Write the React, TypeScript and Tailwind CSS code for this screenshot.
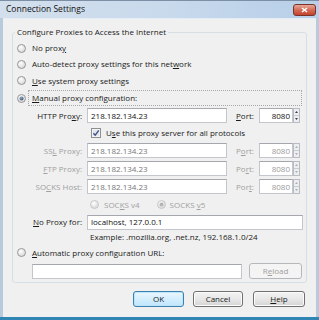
const font = "font-['Open_Sans',sans-serif] text-[8px] leading-none";

function U({ children }: { children: string }) {
  return <span className="underline underline-offset-[1px]">{children}</span>;
}

function Radio({ checked, disabled }: { checked?: boolean; disabled?: boolean }) {
  return (
    <svg width="9" height="9" viewBox="0 0 9 9" className="shrink-0">
      <defs>
        <radialGradient id="rg" cx="0.4" cy="0.35" r="0.7">
          <stop offset="0" stopColor="#ffffff" />
          <stop offset="1" stopColor={disabled ? "#e6e6e6" : "#d4d4d4"} />
        </radialGradient>
        <radialGradient id="dot" cx="0.4" cy="0.35" r="0.7">
          <stop offset="0" stopColor="#9bb0c8" />
          <stop offset="1" stopColor="#2e4a6a" />
        </radialGradient>
      </defs>
      <circle cx="4.5" cy="4.5" r="4" fill="url(#rg)" stroke={disabled ? "#c4c4c4" : "#8e8f8f"} strokeWidth="0.9" />
      {checked && <circle cx="4.5" cy="4.5" r="2" fill={disabled ? "#b5b5b5" : "url(#dot)"} />}
    </svg>
  );
}

function Check() {
  return (
    <svg width="10" height="10" viewBox="0 0 10 10" className="shrink-0">
      <rect x="0.5" y="0.5" width="9" height="9" fill="#f4f4f4" stroke="#8e8f8f" />
      <rect x="2" y="2" width="6" height="6" fill="#e2e6ea" />
      <path d="M2.4 5.2 L4.2 7.2 L7.8 2.4" fill="none" stroke="#3a4f8a" strokeWidth="1.3" />
    </svg>
  );
}

function Input({ value, w, disabled }: { value?: string; w: string; disabled?: boolean }) {
  return (
    <div
      className={`${w} h-[15px] flex items-center px-[3px] bg-white border border-[#c3c6cc] border-t-[#a4a7ad] ${
        disabled ? "text-[#767676]" : "text-[#111]"
      }`}
    >
      {value}
    </div>
  );
}

function PortBox({ disabled }: { disabled?: boolean }) {
  return (
    <div className="flex h-[15px]">
      <div
        className={`w-[34px] flex items-center justify-end pr-[2px] bg-white border border-[#c3c6cc] border-t-[#a4a7ad] ${
          disabled ? "text-[#9a9a9a]" : "text-[#111]"
        }`}
      >
        8080
      </div>
      <div className="w-[7px] flex flex-col border border-[#b9bcc2] bg-[#eceef1]">
        <div className="flex-1 flex items-center justify-center border-b border-[#c9ccd1]">
          <svg width="3" height="2" viewBox="0 0 3 2">
            <path d="M0 2 L1.5 0 L3 2 Z" fill={disabled ? "#b0b0b0" : "#404040"} />
          </svg>
        </div>
        <div className="flex-1 flex items-center justify-center">
          <svg width="3" height="2" viewBox="0 0 3 2">
            <path d="M0 0 L1.5 2 L3 0 Z" fill={disabled ? "#b0b0b0" : "#404040"} />
          </svg>
        </div>
      </div>
    </div>
  );
}

function ProxyRow({
  label,
  port,
  disabled,
  className,
}: {
  label: React.ReactNode;
  port: React.ReactNode;
  disabled?: boolean;
  className?: string;
}) {
  return (
    <div className={`flex items-center h-[15px] ${className}`}>
      <div className={`w-[65px] text-right ${disabled ? "text-[#a0a0a0]" : ""}`}>{label}</div>
      <div className="ml-[5px]">
        <Input value="218.182.134.23" w="w-[140px]" disabled={disabled} />
      </div>
      <div className={`ml-[9px] w-[23px] ${disabled ? "text-[#a0a0a0]" : ""}`}>{port}</div>
      <PortBox disabled={disabled} />
    </div>
  );
}

function Button({ children, w, primary, disabled }: { children: React.ReactNode; w: string; primary?: boolean; disabled?: boolean }) {
  return (
    <div
      className={`${w} h-[16px] flex items-center justify-center rounded-[3px] border ${
        primary
          ? "border-[#3c7fb1] bg-gradient-to-b from-[#eaf6fd] to-[#bee6fd] shadow-[inset_0_0_0_1px_#bde4f7]"
          : disabled
          ? "border-[#b5b8bb] bg-[#f4f4f4] text-[#a0a0a0]"
          : "border-[#707070] bg-gradient-to-b from-[#f2f2f2] via-[#e8e8e8] to-[#d4d4d4] shadow-[inset_0_0_0_1px_#fcfcfc]"
      }`}
    >
      {children}
    </div>
  );
}

export default function App() {
  return (
    <div className={`${font} w-[319px] h-[320px] flex flex-col bg-[#b9cadd] text-[#1a1a1a]`}>
      {/* title bar */}
      <div className="h-[18px] shrink-0 flex items-center justify-between bg-gradient-to-r from-[#d3dfec] via-[#c9daec] to-[#b7cfe9] border-t border-[#7d8fa5]">
        <div className="pl-[6px] text-[8.5px] text-[#111]">Connection Settings</div>
        <div className="mr-[3px] w-[23px] h-[12px] rounded-[3px] border border-[#7a3328] bg-gradient-to-b from-[#e8a898] via-[#d26a56] to-[#c4412c] flex items-center justify-center">
          <svg width="7" height="6" viewBox="0 0 7 6">
            <path d="M1 1 L6 5 M6 1 L1 5" stroke="#fff" strokeWidth="1.6" />
          </svg>
        </div>
      </div>

      {/* client */}
      <div className="flex-1 flex flex-col ml-[3px] mr-[3px] mb-[3px] bg-[#f0f0f0] border-t border-[#e4ecf5]">
        <div className="relative mt-[13px] mx-[9px] border border-[#d5dfe5] rounded-[3px] pl-[4px] pb-[3px]">
          <div className="absolute -top-[5px] left-[2px] px-[2px] bg-[#f0f0f0]">Configure Proxies to Access the Internet</div>

          <div className="flex flex-col pt-[7px]">
            <div className="h-[16px] flex items-center gap-[6px]">
              <Radio />
              <span>
                No prox<U>y</U>
              </span>
            </div>
            <div className="h-[16px] flex items-center gap-[6px]">
              <Radio />
              <span>
                Auto-detect proxy settings for this net<U>w</U>ork
              </span>
            </div>
            <div className="h-[17px] flex items-center gap-[6px]">
              <Radio />
              <span>
                <U>U</U>se system proxy settings
              </span>
            </div>
            <div className="mt-[1px] h-[16px] flex items-center gap-[2px]">
              <Radio checked />
              <div className="flex-1 h-full flex items-center pl-[3px] mr-[4px] border border-dotted border-[#a8a8a8]">
                <U>M</U>anual proxy configuration:
              </div>
            </div>

            <ProxyRow
              className="mt-[2px]"
              label={
                <>
                  HTTP Pro<U>x</U>y:
                </>
              }
              port={
                <>
                  <U>P</U>ort:
                </>
              }
            />

            <div className="mt-[1px] h-[18px] flex items-center pl-[74px] gap-[5px]">
              <Check />
              <span>
                U<U>s</U>e this proxy server for all protocols
              </span>
            </div>

            <ProxyRow
              className="mt-[1px]"
              disabled
              label={
                <>
                  SS<U>L</U> Proxy:
                </>
              }
              port={
                <>
                  P<U>o</U>rt:
                </>
              }
            />
            <ProxyRow
              className="mt-[3px]"
              disabled
              label={
                <>
                  <U>F</U>TP Proxy:
                </>
              }
              port={
                <>
                  Po<U>r</U>t:
                </>
              }
            />
            <ProxyRow
              className="mt-[3px]"
              disabled
              label={
                <>
                  SO<U>C</U>KS Host:
                </>
              }
              port={
                <>
                  Por<U>t</U>:
                </>
              }
            />

            <div className="h-[21px] flex items-center pl-[73px] text-[#a0a0a0]">
              <Radio disabled />
              <span className="ml-[5px]">
                SOC<U>K</U>S v4
              </span>
              <span className="ml-[17px]">
                <Radio checked disabled />
              </span>
              <span className="ml-[4px]">
                SOCKS <U>v</U>5
              </span>
            </div>

            <div className="h-[14px] flex items-center">
              <div className="w-[65px] text-right">
                <U>N</U>o Proxy for:
              </div>
              <div className="ml-[5px]">
                <Input value="localhost, 127.0.0.1" w="w-[216px]" />
              </div>
            </div>

            <div className="h-[15px] flex items-center pl-[73px]">Example: .mozilla.org, .net.nz, 192.168.1.0/24</div>

            <div className="h-[17px] flex items-center gap-[6px]">
              <Radio />
              <span>
                <U>A</U>utomatic proxy configuration URL:
              </span>
            </div>

            <div className="mt-[2px] h-[16px] flex items-center pl-[15px]">
              <Input w="w-[210px]" />
              <div className="ml-[7px]">
                <Button w="w-[53px]" disabled>
                  R<U>e</U>load
                </Button>
              </div>
            </div>
          </div>
        </div>

        <div className="mt-[8px] flex justify-end pr-[11px]">
          <Button w="w-[51px]" primary>
            OK
          </Button>
          <div className="ml-[9px]">
            <Button w="w-[50px]">Cancel</Button>
          </div>
          <div className="ml-[10px]">
            <Button w="w-[52px]">
              <U>H</U>elp
            </Button>
          </div>
        </div>
      </div>
      <div className="h-0 border-b-[3px] border-[#2f86b5] -mt-[3px]" />
    </div>
  );
}
